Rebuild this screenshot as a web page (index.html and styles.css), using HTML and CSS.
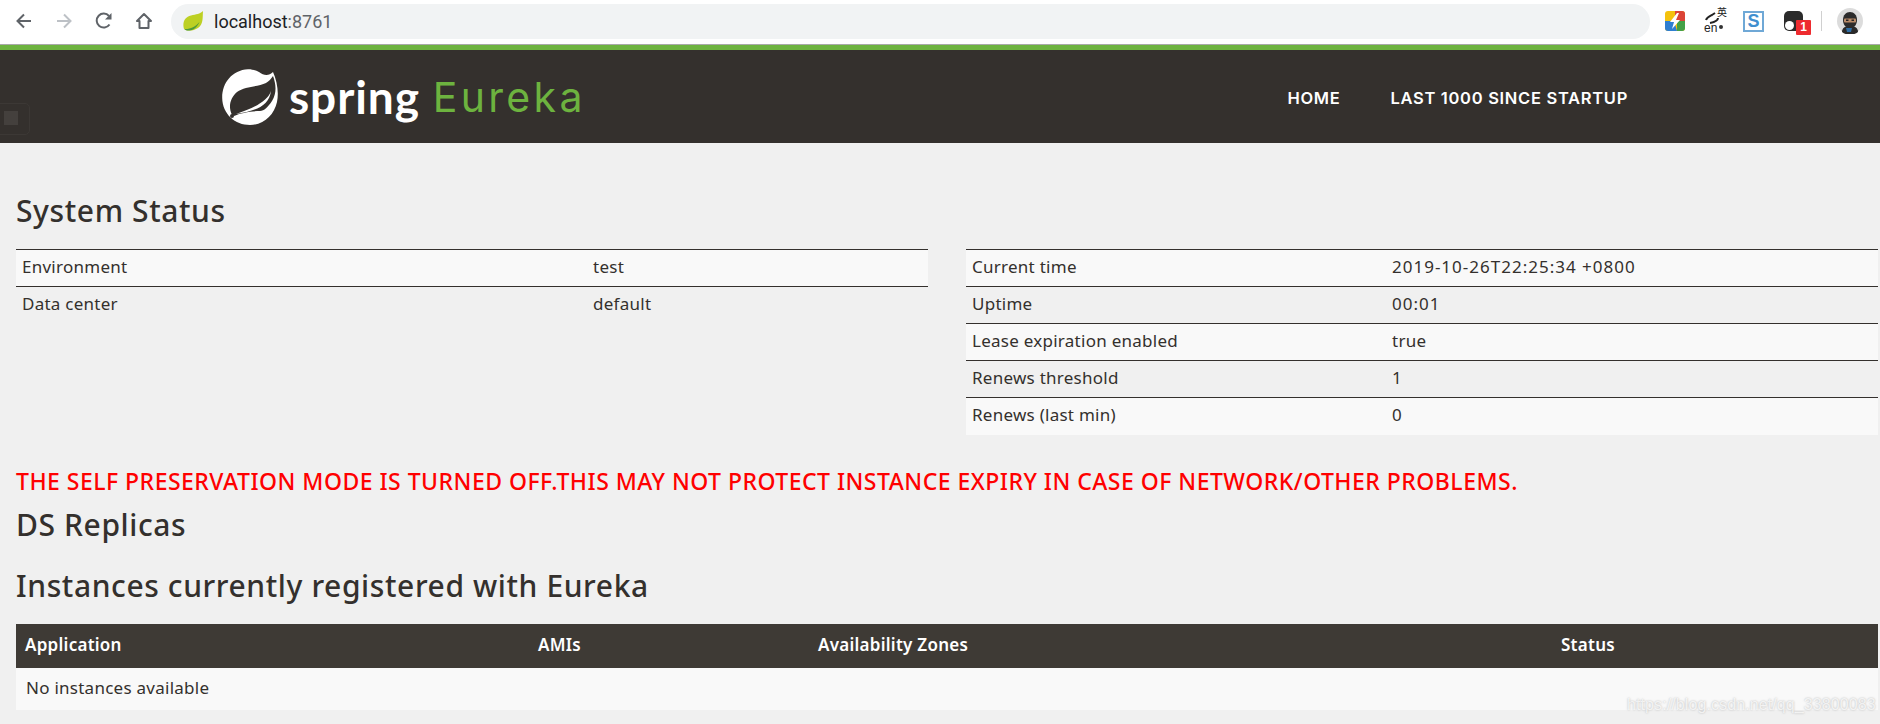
FILE: index.html
```html
<!DOCTYPE html>
<html lang="en">
<head>
<meta charset="utf-8">
<title>Eureka</title>
<link rel="stylesheet" href="styles.css">
</head>
<body>
<div class="toolbar">
  <div class="nav-buttons">
    <svg class="tb-icon" viewBox="0 0 20 20"><path d="M17 10H4M10 3.500 3.500 10l6.500 6.500" fill="none" stroke="#5f6368" stroke-width="2"/></svg>
    <svg class="tb-icon" viewBox="0 0 20 20"><path d="M3 10h13M10 3.500l6.500 6.500-6.500 6.500" fill="none" stroke="#bdc1c6" stroke-width="2"/></svg>
    <svg class="tb-icon" viewBox="0 0 20 20"><path d="M15.500 13.500A7 7 0 1 1 15 5" fill="none" stroke="#5f6368" stroke-width="2"/><path d="M17.500 2v6.500H11z" fill="#5f6368"/></svg>
    <svg class="tb-icon" viewBox="0 0 20 20"><path d="M10 3 3 10h2.500v7h9v-7H17z" fill="none" stroke="#5f6368" stroke-width="2" stroke-linejoin="round"/></svg>
  </div>
  <div class="omnibox">
    <svg class="favicon" viewBox="0 0 20 20"><path d="M20 0C19.500 7 20.500 13 15 17 10.500 20 4 20.500 1 18-1 11 2 6 8 4.500c5-1.300 9-1.500 12-4.500z" fill="#bdd023"/><path d="M1.500 18c5 .5 11-2 15-7-2 5-6 8-10 8.500-2 .2-4 0-5-1.500z" fill="#4f9a3a"/></svg>
    <span class="host">localhost</span><span class="port">:8761</span>
  </div>
  <div class="extensions">
    <svg class="ext ext-bolt" viewBox="0 0 20 20"><rect width="20" height="20" rx="3" fill="#f4c20d"/><path d="M10 0h7a3 3 0 0 1 3 3v8H10z" fill="#db4437"/><path d="M0 10h9l3 10H3a3 3 0 0 1-3-3z" fill="#2f7fd1"/><path d="M12 10h8v7a3 3 0 0 1-3 3h-5z" fill="#43a047"/><path d="M12 2 5 11h4l-2 7 8-9h-4l3-7z" fill="#fff"/></svg>
    <div class="ext-en"><span class="en-cn">英</span><span class="en-latin">en</span><svg class="en-arrows" viewBox="0 0 24 24"><path d="M2 12c1-3 4-4 6-5l3-2" fill="none" stroke="#222" stroke-width="2"/><path d="M14 10c0 3-3 4-8 5" fill="none" stroke="#222" stroke-width="2"/><circle cx="17" cy="19" r="2" fill="#333"/></svg></div>
    <div class="ext-s">S</div>
    <div class="ext-dark"><span class="ext-dot"></span><span class="badge">1</span></div>
    <span class="tb-sep"></span>
    <svg class="avatar" viewBox="0 0 26 26"><circle cx="13" cy="13" r="13" fill="#dcdcdc"/><path d="M5 24c0-4 3-6 8-6s8 2 8 6a13 13 0 0 1-16 0z" fill="#2a2a2a"/><path d="M6 12c0-5 3-8 7-8s7 3 7 8-3 8-7 8-7-3-7-8z" fill="#2b2b2b"/><rect x="7" y="10.500" width="12" height="4" rx="1" fill="#b88a68"/><rect x="9" y="11.500" width="2.500" height="1.500" fill="#222"/><rect x="14.500" y="11.500" width="2.500" height="1.500" fill="#222"/><path d="M9 20h6l-1 4h-4z" fill="#2e6da4"/></svg>
  </div>
</div>
<header class="site-header">
  <a class="logo">
    <svg class="logo-leaf" viewBox="0 0 56 56">
      <path d="M51 3C47 7 42 7 37 3 33 1 29 0 26 .2 10 1 0 14 .2 29 .5 45 13 56 28 56c14 0 24-10 27-23 2-10 0-21-4-30z" fill="#fff"/>
      <path d="M10 46C6 38 8 29 15 23c8-6 21-5 29-9 3-2 5-4 7-7 3 8 4 17-1 25-4 6-8 10-12 10-8 0-20 2-26 5z" fill="#34302d"/>
      <path d="M49 22C46 32 32 39 14 45 32 42 47 38 49 22z" fill="#fff"/>
      <circle cx="10" cy="47" r="2" fill="#34302d"/>
    </svg>
    <span class="logo-spring">spring</span>
    <span class="logo-eureka">Eureka</span>
  </a>
  <nav class="site-nav">
    <a>HOME</a>
    <a>LAST 1000 SINCE STARTUP</a>
  </nav>
  <div class="ghost"><span></span></div>
</header>
<main class="content">
  <h2 class="system">System Status</h2>
  <div class="status-columns">
    <table class="info info-env">
      <tr><td>Environment</td><td>test</td></tr>
      <tr><td>Data center</td><td>default</td></tr>
    </table>
    <table class="info info-time">
      <tr><td>Current time</td><td class="num">2019-10-26T22:25:34 +0800</td></tr>
      <tr><td>Uptime</td><td class="num">00:01</td></tr>
      <tr><td>Lease expiration enabled</td><td>true</td></tr>
      <tr><td>Renews threshold</td><td class="num">1</td></tr>
      <tr><td>Renews (last min)</td><td class="num">0</td></tr>
    </table>
  </div>
  <h4 class="warning">THE SELF PRESERVATION MODE IS TURNED OFF.THIS MAY NOT PROTECT INSTANCE EXPIRY IN CASE OF NETWORK/OTHER PROBLEMS.</h4>
  <h2 class="replicas">DS Replicas</h2>
  <h2 class="instances">Instances currently registered with Eureka</h2>
  <table class="apps">
    <thead>
      <tr><th class="col-app">Application</th><th class="col-ami">AMIs</th><th class="col-zone">Availability Zones</th><th>Status</th></tr>
    </thead>
    <tbody>
      <tr><td colspan="4">No instances available</td></tr>
    </tbody>
  </table>
</main>
<div class="watermark">https://blog.csdn.net/qq_33800083</div>
</body>
</html>
```
FILE: styles.css
```css
* { box-sizing: border-box; }
html, body { margin: 0; padding: 0; }
body {
  width: 1880px;
  height: 724px;
  overflow: hidden;
  background: #f0f0f0;
  color: #34302d;
  font-family: "Noto Sans", sans-serif;
  font-size: 17px;
  letter-spacing: 0.26px;
  position: relative;
}
.toolbar {
  height: 45px;
  background: #fff;
  border-bottom: 1px solid #a9a9a9;
  display: flex;
  align-items: center;
  padding: 0 0 2px 14px;
  letter-spacing: 0;
}
.nav-buttons { display: flex; gap: 20px; width: 157px; }
.tb-icon { width: 20px; height: 20px; display: block; }
.omnibox {
  width: 1479px;
  height: 35px;
  border-radius: 18px;
  background: #f1f3f4;
  display: flex;
  align-items: center;
  padding-left: 12px;
  font-family: "Roboto", sans-serif;
  font-size: 18px;
}
.favicon { width: 20px; height: 20px; margin-right: 11px; }
.host { color: #202124; }
.port { color: #5f6368; }
.extensions { display: flex; align-items: center; padding-left: 15px; }
.ext-bolt { width: 20px; height: 20px; display: block; }
.ext-en { width: 24px; height: 26px; margin-left: 19px; position: relative; font-family: "Noto Sans CJK SC", sans-serif; color: #222; }
.en-cn { position: absolute; right: 1px; top: -3px; font-size: 10px; line-height: 14px; }
.en-latin { position: absolute; left: 0; bottom: 0; font-size: 12px; line-height: 12px; font-family: "Liberation Sans", sans-serif; }
.en-arrows { position: absolute; inset: 0; width: 24px; height: 24px; }
.ext-s {
  width: 21px; height: 21px; margin-left: 15px;
  background: #fff; border: 2px solid #6fa8d6;
  color: #3f8fcf; font: 700 18px/17px "Liberation Sans", sans-serif; text-align: center;
}
.ext-dark { width: 19px; height: 20px; margin-left: 20px; border-radius: 5px; background: #2b2b2b; position: relative; }
.ext-dot { position: absolute; left: 1px; bottom: 1px; width: 9px; height: 9px; border-radius: 50%; background: #fff; }
.badge {
  position: absolute; left: 12px; top: 9px; width: 15px; height: 15px;
  background: #ee2b2f; color: #fff; font: 700 12px/15px "Liberation Sans", sans-serif; text-align: center; border-radius: 1px;
}
.tb-sep { width: 1px; height: 20px; background: #d0d0d0; margin-left: 18px; }
.avatar { width: 26px; height: 26px; margin-left: 15px; display: block; }

.site-header {
  height: 98px;
  background: #34302d;
  border-top: 5px solid #6db33f;
  display: flex;
  align-items: center;
  padding-left: 222px;
  position: relative;
  letter-spacing: 0;
}
.logo { display: flex; align-items: center; }
.logo-leaf { width: 56px; height: 56px; display: block; }
.logo-spring { margin-left: 11px; font-family: "Lato", sans-serif; font-weight: 700; font-size: 46px; letter-spacing: 0.9px; color: #fff; }
.logo-eureka { margin-left: 13px; font-family: "Inter", sans-serif; font-weight: 400; font-size: 41px; letter-spacing: 3.3px; color: #6db33f; }
.site-nav { margin-left: auto; padding: 2px 252px 0 0; display: flex; gap: 50px; font-family: "Inter", sans-serif; font-weight: 600; font-size: 16.500px; letter-spacing: 0.7px; color: #fff; }
.ghost { position: absolute; left: -8px; top: 53px; width: 38px; height: 32px; border: 1px solid #3c3835; border-radius: 5px; padding: 7px 0 0 11px; }
.ghost span { display: block; width: 14px; height: 14px; background: #44403d; }

.content { padding: 0 2px 0 16px; }
h2 { font-size: 30px; line-height: 36px; font-weight: 500; letter-spacing: 0.6px; }
h2.system { margin: 50px 0 20px; }
.status-columns { display: flex; gap: 38px; }
table { border-collapse: collapse; border-spacing: 0; }
.info { width: 912px; table-layout: fixed; align-self: flex-start; }
.info td { height: 37px; padding: 0 6px 4px; border-top: 1px solid #34302d; }
.info .num { letter-spacing: 1px; }
.info tr:nth-child(odd) td { background: #f9f9f9; }
.info-env td:first-child { width: 571px; }
.info-time td:first-child { width: 420px; }
.warning { margin: 31px 0 0; color: #f00; font-size: 23px; line-height: 30px; font-weight: 500; letter-spacing: 0.48px; white-space: nowrap; }
h2.replicas { margin: 11px 0 0; }
h2.instances { margin: 25px 0 20px; }
.apps { width: 100%; table-layout: fixed; }
.apps th { height: 44px; padding: 0 9px 2px; background: #3e3a35; color: #fff; text-align: left; font-weight: 600; }
.col-app { width: 513px; }
.col-ami { width: 280px; }
.col-zone { width: 743px; }
.apps td { height: 42px; padding: 0 10px 2px; background: #f9f9f9; }
.watermark {
  position: absolute; left: 1627px; top: 695px;
  font: 16px/20px "Liberation Sans", sans-serif;
  letter-spacing: 0.1px;
  color: rgba(255,255,255,.75);
  text-shadow: 0 0 2px rgba(120,120,120,.55);
}
```
